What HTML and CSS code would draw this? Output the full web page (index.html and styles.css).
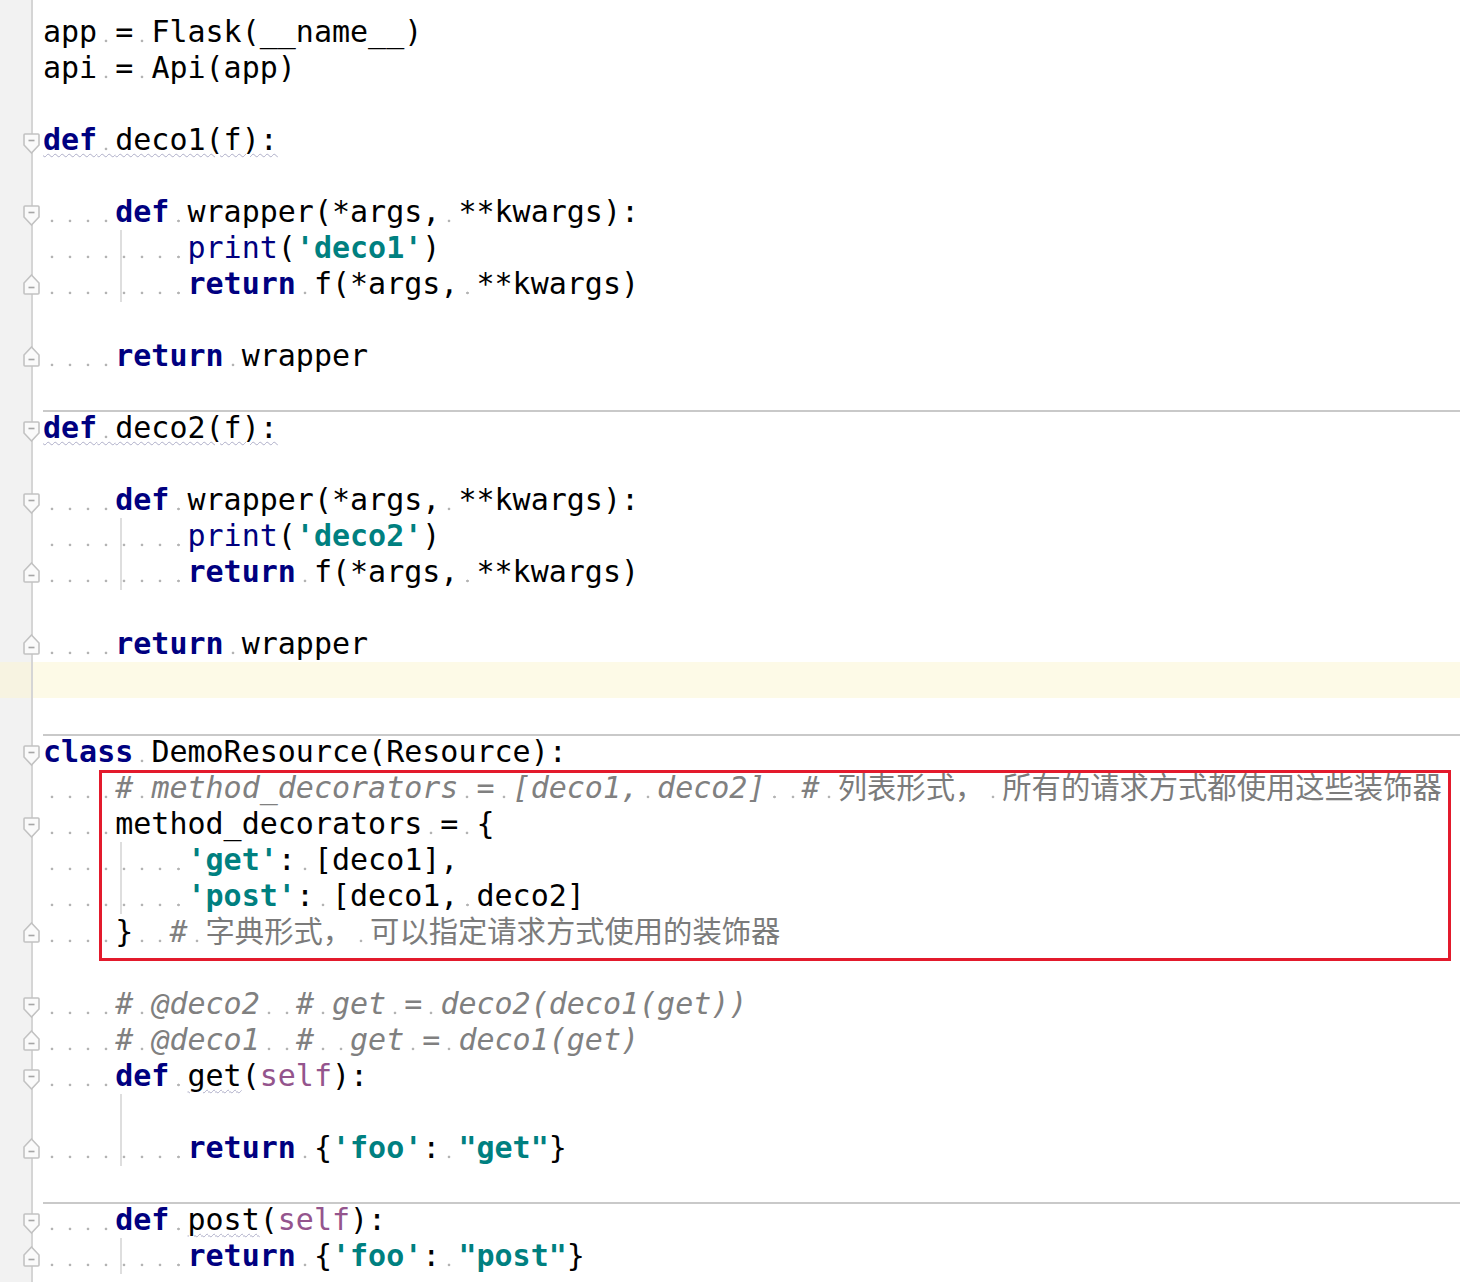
FILE: index.html
```html
<!DOCTYPE html>
<html lang="en">
<head>
    <meta charset="UTF-8">
    <meta name="viewport" content="width=device-width, initial-scale=1.0">
    <title>flask_restful method_decorators</title>
    <link rel="stylesheet" href="styles.css">
</head>
<body>

<svg class="defs" aria-hidden="true">
    <symbol id="fold-open" viewBox="0 0 17 21">
        <path d="M1 2 Q1 1 2 1 H15 Q16 1 16 2 V12 L8.5 20 L1 12 Z" fill="#fafafa" stroke="#c2c2c2" stroke-width="1.6"/>
        <path d="M5.5 7.5 H11.5" stroke="#a6a6a6" stroke-width="1.6"/>
    </symbol>
    <symbol id="fold-close" viewBox="0 0 17 21">
        <path d="M8.5 1 L16 9 V19 Q16 20 15 20 H2 Q1 20 1 19 V9 Z" fill="#fafafa" stroke="#c2c2c2" stroke-width="1.6"/>
        <path d="M5.5 13.5 H11.5" stroke="#a6a6a6" stroke-width="1.6"/>
    </symbol>
</svg>

<div class="editor">
    <div class="row"><span class="gut"></span><span class="src">app = Flask(__name__)</span></div>
    <div class="row"><span class="gut"></span><span class="src">api = Api(app)</span></div>
    <div class="row"><span class="gut"></span><span class="src"></span></div>
    <div class="row"><span class="gut"><svg class="fold open"><use href="#fold-open"/></svg></span><span class="src"><span class="wv"><span class="k">def</span> deco1(f):</span></span></div>
    <div class="row"><span class="gut"></span><span class="src"></span></div>
    <div class="row"><span class="gut"><svg class="fold open"><use href="#fold-open"/></svg></span><span class="src">    <span class="k">def</span> wrapper(*args, **kwargs):</span></div>
    <div class="row"><span class="gut"></span><span class="src g1">        <span class="b">print</span>(<span class="s">'deco1'</span>)</span></div>
    <div class="row"><span class="gut"><svg class="fold close"><use href="#fold-close"/></svg></span><span class="src g1">        <span class="k">return</span> f(*args, **kwargs)</span></div>
    <div class="row"><span class="gut"></span><span class="src"></span></div>
    <div class="row"><span class="gut"><svg class="fold close"><use href="#fold-close"/></svg></span><span class="src">    <span class="k">return</span> wrapper</span></div>
    <div class="row"><span class="gut"></span><span class="src"></span></div>
    <div class="row"><span class="gut"><svg class="fold open"><use href="#fold-open"/></svg></span><span class="src sep"><span class="wv"><span class="k">def</span> deco2(f):</span></span></div>
    <div class="row"><span class="gut"></span><span class="src"></span></div>
    <div class="row"><span class="gut"><svg class="fold open"><use href="#fold-open"/></svg></span><span class="src">    <span class="k">def</span> wrapper(*args, **kwargs):</span></div>
    <div class="row"><span class="gut"></span><span class="src g1">        <span class="b">print</span>(<span class="s">'deco2'</span>)</span></div>
    <div class="row"><span class="gut"><svg class="fold close"><use href="#fold-close"/></svg></span><span class="src g1">        <span class="k">return</span> f(*args, **kwargs)</span></div>
    <div class="row"><span class="gut"></span><span class="src"></span></div>
    <div class="row"><span class="gut"><svg class="fold close"><use href="#fold-close"/></svg></span><span class="src">    <span class="k">return</span> wrapper</span></div>
    <div class="row current"><span class="gut"></span><span class="src"></span></div>
    <div class="row"><span class="gut"></span><span class="src"></span></div>
    <div class="row"><span class="gut"><svg class="fold open"><use href="#fold-open"/></svg></span><span class="src sep"><span class="k">class</span> DemoResource(Resource):</span></div>
    <div class="row"><span class="gut"></span><span class="src">    <span class="c"># method_decorators = [deco1, deco2]  # <span class="zh">列表形式，</span> <span class="zh">所有的请求方式都使用这些装饰器</span></span></span></div>
    <div class="row"><span class="gut"><svg class="fold open"><use href="#fold-open"/></svg></span><span class="src">    method_decorators = {</span></div>
    <div class="row"><span class="gut"></span><span class="src g1">        <span class="s">'get'</span>: [deco1],</span></div>
    <div class="row"><span class="gut"></span><span class="src g1">        <span class="s">'post'</span>: [deco1, deco2]</span></div>
    <div class="row"><span class="gut"><svg class="fold close"><use href="#fold-close"/></svg></span><span class="src">    }  <span class="c"># <span class="zh">字典形式，</span> <span class="zh">可以指定请求方式使用的装饰器</span></span></span></div>
    <div class="row"><span class="gut"></span><span class="src"></span></div>
    <div class="row"><span class="gut"><svg class="fold open"><use href="#fold-open"/></svg></span><span class="src">    <span class="c"># @deco2  # get = deco2(deco1(get))</span></span></div>
    <div class="row"><span class="gut"><svg class="fold close"><use href="#fold-close"/></svg></span><span class="src">    <span class="c"># @deco1  #  get = deco1(get)</span></span></div>
    <div class="row"><span class="gut"><svg class="fold open"><use href="#fold-open"/></svg></span><span class="src">    <span class="k">def</span> <span class="wv">get</span>(<span class="sf">self</span>):</span></div>
    <div class="row"><span class="gut"></span><span class="src g1"></span></div>
    <div class="row"><span class="gut"><svg class="fold close"><use href="#fold-close"/></svg></span><span class="src g1">        <span class="k">return</span> {<span class="s">'foo'</span>: <span class="s">"get"</span>}</span></div>
    <div class="row"><span class="gut"></span><span class="src"></span></div>
    <div class="row"><span class="gut"><svg class="fold open"><use href="#fold-open"/></svg></span><span class="src sep">    <span class="k">def</span> <span class="wv">post</span>(<span class="sf">self</span>):</span></div>
    <div class="row"><span class="gut"><svg class="fold close"><use href="#fold-close"/></svg></span><span class="src g1">        <span class="k">return</span> {<span class="s">'foo'</span>: <span class="s">"post"</span>}</span></div>

    <div class="mark"></div>
</div>

<script>
    // show whitespace: every space gets a small dot, like the IDE does
    function dots(node) {
        [...node.childNodes].forEach(function (n) {
            if (n.nodeType === 3) {
                if (n.data.indexOf(' ') < 0) return;
                const frag = document.createDocumentFragment();
                n.data.split(/( )/).forEach(function (part) {
                    if (part === ' ') {
                        const s = document.createElement('span');
                        s.className = 'ws';
                        s.textContent = ' ';
                        frag.appendChild(s);
                    } else if (part) {
                        frag.appendChild(document.createTextNode(part));
                    }
                });
                n.replaceWith(frag);
            } else {
                dots(n);
            }
        });
    }

    document.querySelectorAll('.src').forEach(dots);
</script>

</body>
</html>
```

FILE: styles.css
```css
body {
    margin: 0;
    background-color: #fff;
    color: #000;
    font-family: "DejaVu Sans Mono", "Noto Sans CJK SC", monospace;
    font-size: 30px;
}
.defs {
    position: absolute;
    width: 0;
    height: 0;
    overflow: hidden;
}
.editor {
    position: relative;
    min-height: 1282px;
    padding-top: 14px;
    box-sizing: border-box;
    background: linear-gradient(to right, #f2f2f2 31px, #d5d5d5 31px, #d5d5d5 33px, #fff 33px);
}
.row {
    display: flex;
    height: 36px;
}
.row.current {
    background-color: #fdfae7;
}
.row.current .gut {
    background: linear-gradient(to right, #f7f3e1 31px, #d5d5d5 31px);
}
.gut {
    flex: none;
    width: 33px;
    position: relative;
}
.src {
    flex: 1;
    margin-left: 10px;
    white-space: pre;
    line-height: 36px;
}
.src.sep {
    box-shadow: inset 0 2px 0 #c9c9c9;
}
.src.g1 {
    background: linear-gradient(#dedede, #dedede) 77px 0 / 2px 100% no-repeat;
}
.fold {
    position: absolute;
    left: 23px;
    width: 17px;
    height: 21px;
}
.fold.open {
    top: 11px;
}
.fold.close {
    top: 8px;
}
.ws {
    background: radial-gradient(circle at 50% 77%, #b3b3b3 1px, transparent 1.7px);
}
.k {
    color: #000080;
    font-weight: bold;
}
.b {
    color: #000080;
}
.s {
    color: #008080;
    font-weight: bold;
}
.sf {
    color: #94558d;
}
.c {
    color: #808080;
    font-style: italic;
}
.zh {
    font-family: "Noto Sans CJK SC", sans-serif;
    font-style: normal;
    font-size: 29.3px;
    line-height: 29px;
    color: #7b7b7b;
}
.wv {
    text-decoration: underline wavy #aeaec8;
    text-decoration-thickness: 1px;
    text-underline-offset: 3px;
}
.mark {
    position: absolute;
    left: 99px;
    top: 770px;
    width: 1352px;
    height: 191px;
    box-sizing: border-box;
    border: 3px solid #e31a2c;
}
```
